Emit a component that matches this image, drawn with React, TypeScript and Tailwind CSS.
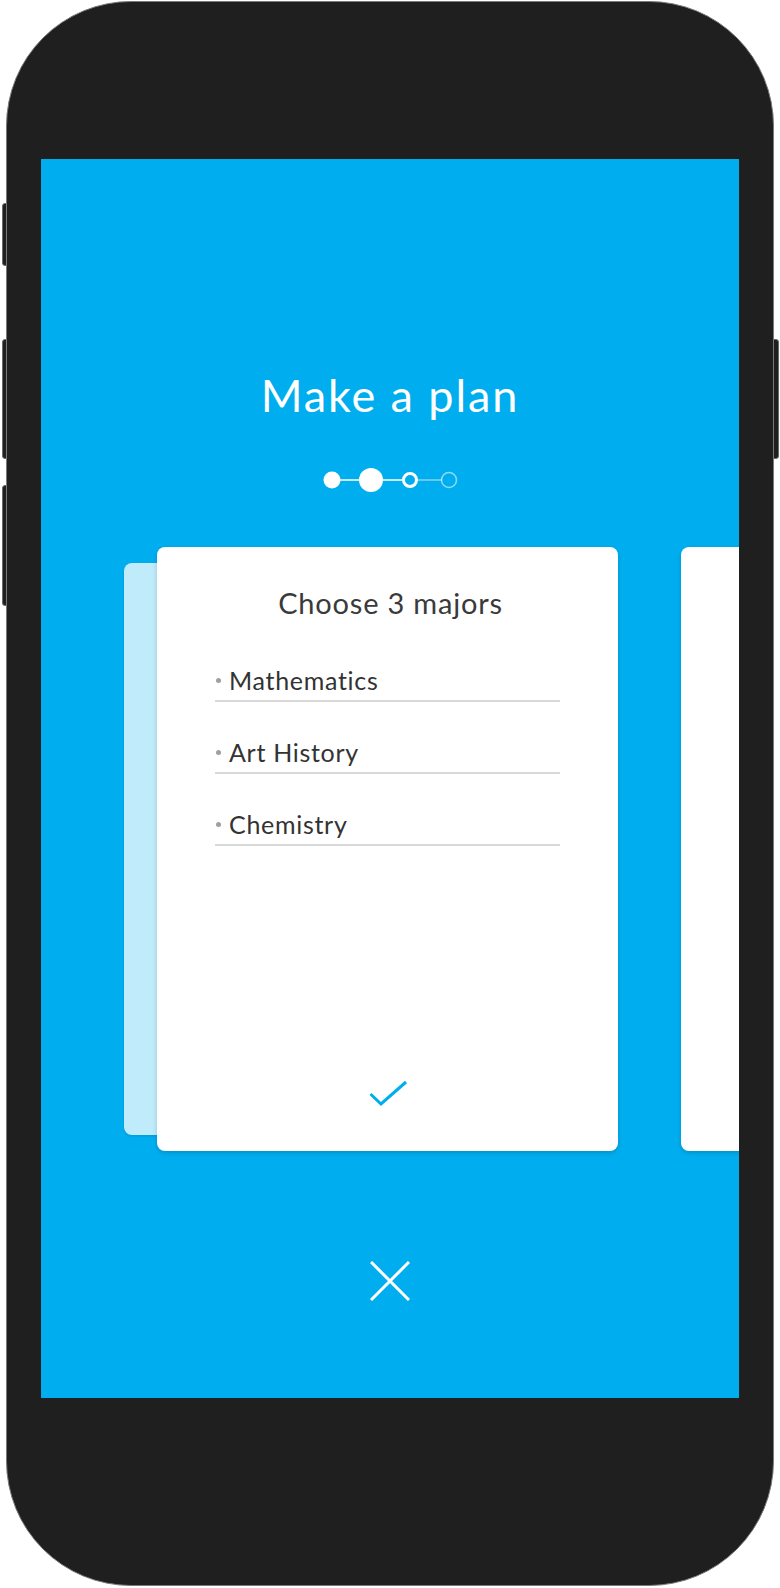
const majors = ["Mathematics", "Art History", "Chemistry"]

const StepDots = () => (
  <svg width="136" height="26" viewBox="0 0 136 26" fill="none">
    <line x1="18" y1="13" x2="38" y2="13" stroke="#fff" strokeWidth="1.5" />
    <line x1="60" y1="13" x2="80" y2="13" stroke="#fff" strokeWidth="1.5" />
    <line x1="96" y1="13" x2="120" y2="13" stroke="#fff" strokeOpacity="0.5" strokeWidth="1.5" />
    <circle cx="10" cy="13" r="8.5" fill="#fff" />
    <circle cx="49" cy="13" r="12" fill="#fff" />
    <circle cx="88" cy="13" r="6.5" stroke="#fff" strokeWidth="3" />
    <circle cx="127" cy="13" r="7.5" stroke="#fff" strokeOpacity="0.55" strokeWidth="1.5" />
  </svg>
)

const MajorsCard = () => (
  <div className="relative w-[461px] h-[604px] shrink-0">
    {/* previous card peeking out behind */}
    <div className="absolute left-[-33px] top-[16px] bottom-[16px] w-[60px] rounded-lg bg-white/75 shadow-[0_1px_3px_rgba(0,0,0,0.12)]" />
    <div className="relative h-full flex flex-col rounded-lg bg-white shadow-[0_2px_5px_rgba(0,0,0,0.16)] px-[58px] pt-[41px] pb-[43px]">
      <h2 className="pl-[6px] text-center text-[29px] leading-none text-[#3a3a3a] tracking-[0.8px]">
        Choose 3 majors
      </h2>
      <ul className="mt-[51px]">
        {majors.map((m, i) => (
          <li
            key={m}
            className={`flex items-center border-b-2 border-[#d8d8d8] pb-[7px] ${i > 0 ? "mt-[38px]" : ""}`}
          >
            <span className="ml-[1px] mr-[8px] h-[5px] w-[5px] rounded-full bg-[#a0a0a0]" />
            <span className="text-[25px] leading-none text-[#333] tracking-[0.7px]">{m}</span>
          </li>
        ))}
      </ul>
      <div className="mt-auto flex justify-center">
        <svg width="40" height="30" viewBox="0 0 40 30" fill="none">
          <path d="M2.5 16 L13 26 L38 4" stroke="#00aeef" strokeWidth="3" strokeLinejoin="miter" />
        </svg>
      </div>
    </div>
  </div>
)

const App = () => {
  return (
    <div className="relative w-[780px] h-[1588px] bg-white font-['Lato','Liberation_Sans',sans-serif]">
      {/* side buttons */}
      <div className="absolute left-[2px] top-[202px] h-[63px] w-[8px] rounded-l-[3px] bg-[#1f1f1f] border border-[#6a6a6a]" />
      <div className="absolute left-[2px] top-[338px] h-[120px] w-[8px] rounded-l-[3px] bg-[#1f1f1f] border border-[#6a6a6a]" />
      <div className="absolute left-[2px] top-[484px] h-[121px] w-[8px] rounded-l-[3px] bg-[#1f1f1f] border border-[#6a6a6a]" />
      <div className="absolute right-[1px] top-[338px] h-[120px] w-[8px] rounded-r-[3px] bg-[#1f1f1f] border border-[#6a6a6a]" />

      <div className="relative ml-[6px] mt-[1px] w-[768px] h-[1585px] rounded-[125px] bg-[#1f1f1f] border border-[#7a7a7a] pt-[157px] px-[34px]">
        <div className="flex flex-col items-center w-[698px] h-[1239px] bg-[#00aeef] overflow-hidden">
          <h1 className="mt-[214px] text-[45px] leading-none text-white tracking-[1.9px]">Make a plan</h1>
          <div className="mt-[49px]">
            <StepDots />
          </div>
          <div className="mt-[54px] flex self-start pl-[116px]">
            <MajorsCard />
            <div className="ml-[63px] w-[461px] h-[604px] shrink-0 rounded-lg bg-white shadow-[0_2px_5px_rgba(0,0,0,0.16)]" />
          </div>
          <button className="mt-[110px]" aria-label="Close">
            <svg width="40" height="40" viewBox="0 0 40 40" fill="none">
              <path d="M1 1 L39 39 M39 1 L1 39" stroke="#fff" strokeWidth="3" />
            </svg>
          </button>
        </div>
      </div>
    </div>
  )
}

export default App
